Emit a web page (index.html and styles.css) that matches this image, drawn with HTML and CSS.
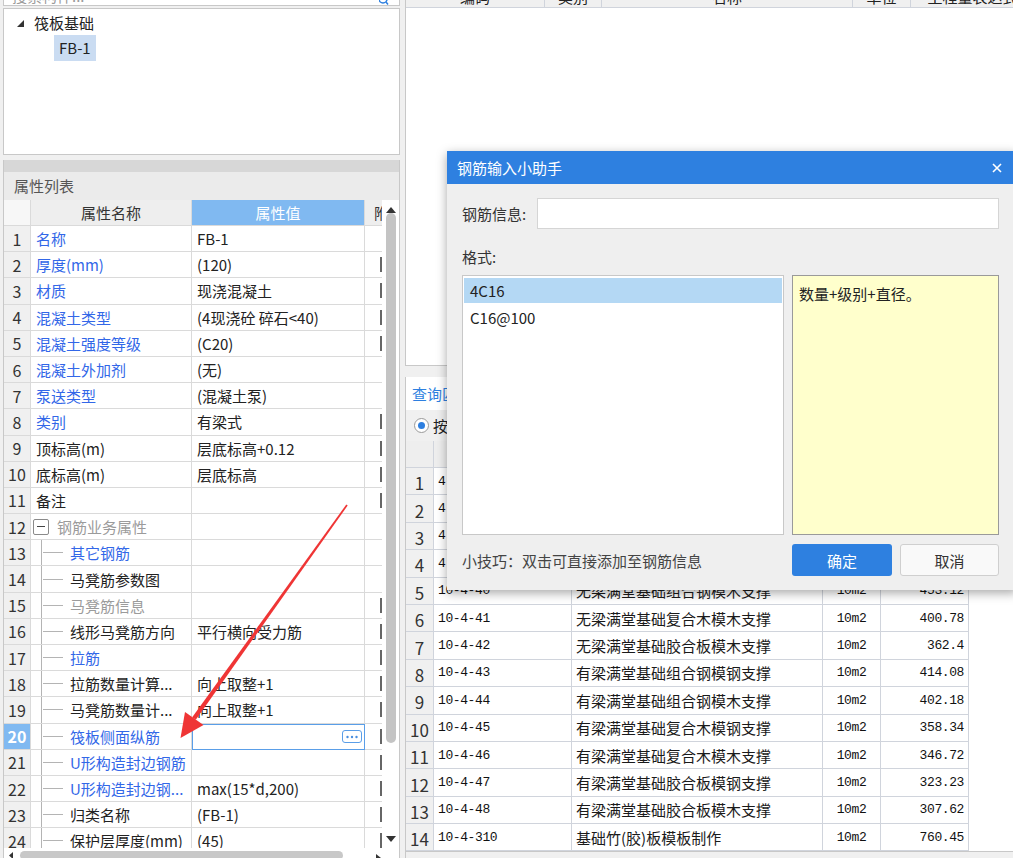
FILE: index.html
```html
<!DOCTYPE html>
<html lang="zh-CN">
<head>
<meta charset="utf-8">
<title>钢筋输入小助手</title>
<link rel="stylesheet" href="styles.css">
</head>
<body>
<div class="app">
  <aside class="left">
    <div class="search">
      <span class="search-text">搜索构件...</span>
      <svg class="search-icon" width="10" height="6" viewBox="0 0 10 6"><circle cx="4" cy="-1" r="4" fill="none" stroke="#2e80e0" stroke-width="1.5"/><line x1="7" y1="2" x2="9" y2="4.5" stroke="#2e80e0" stroke-width="1.5"/></svg>
    </div>
    <div class="tree">
      <div class="tree-row root">
        <svg class="caret" width="7" height="7" viewBox="0 0 7 7"><polygon points="7,0 7,7 0,7" fill="#333"/></svg>
        <span>筏板基础</span>
      </div>
      <div class="tree-row child"><span class="tree-sel">FB-1</span></div>
    </div>
    <section class="prop-panel">
      <div class="strip"></div>
      <div class="prop-title">属性列表</div>
      <div class="grid-wrap">
        <div class="grid">
          <div class="h hrn"></div><div class="h">属性名称</div><div class="h hv">属性值</div><div class="h hx">附加</div>

          <div class="rn">1</div><div class="nm blue">名称</div><div class="val">FB-1</div><div class="ex"></div>
          <div class="rn">2</div><div class="nm blue">厚度(mm)</div><div class="val">(120)</div><div class="ex"><i></i></div>
          <div class="rn">3</div><div class="nm blue">材质</div><div class="val">现浇混凝土</div><div class="ex"><i></i></div>
          <div class="rn">4</div><div class="nm blue">混凝土类型</div><div class="val">(4现浇砼 碎石&lt;40)</div><div class="ex"><i></i></div>
          <div class="rn">5</div><div class="nm blue">混凝土强度等级</div><div class="val">(C20)</div><div class="ex"><i></i></div>
          <div class="rn">6</div><div class="nm blue">混凝土外加剂</div><div class="val">(无)</div><div class="ex"></div>
          <div class="rn">7</div><div class="nm blue">泵送类型</div><div class="val">(混凝土泵)</div><div class="ex"></div>
          <div class="rn">8</div><div class="nm blue">类别</div><div class="val">有梁式</div><div class="ex"><i></i></div>
          <div class="rn">9</div><div class="nm">顶标高(m)</div><div class="val">层底标高+0.12</div><div class="ex"><i></i></div>
          <div class="rn">10</div><div class="nm">底标高(m)</div><div class="val">层底标高</div><div class="ex"><i></i></div>
          <div class="rn">11</div><div class="nm">备注</div><div class="val"></div><div class="ex"><i></i></div>
          <div class="rn">12</div><div class="nm grp"><span class="box"><b></b></span><span class="gray">钢筋业务属性</span></div><div class="val"></div><div class="ex"></div>
          <div class="rn">13</div><div class="nm c"><span class="br"></span><span class="t blue">其它钢筋</span></div><div class="val"></div><div class="ex"></div>
          <div class="rn">14</div><div class="nm c"><span class="br"></span><span class="t">马凳筋参数图</span></div><div class="val"></div><div class="ex"></div>
          <div class="rn">15</div><div class="nm c"><span class="br"></span><span class="t gray">马凳筋信息</span></div><div class="val"></div><div class="ex"><i></i></div>
          <div class="rn">16</div><div class="nm c"><span class="br"></span><span class="t">线形马凳筋方向</span></div><div class="val">平行横向受力筋</div><div class="ex"><i></i></div>
          <div class="rn">17</div><div class="nm c"><span class="br"></span><span class="t blue">拉筋</span></div><div class="val"></div><div class="ex"><i></i></div>
          <div class="rn">18</div><div class="nm c"><span class="br"></span><span class="t">拉筋数量计算...</span></div><div class="val">向上取整+1</div><div class="ex"><i></i></div>
          <div class="rn">19</div><div class="nm c"><span class="br"></span><span class="t">马凳筋数量计...</span></div><div class="val">向上取整+1</div><div class="ex"><i></i></div>
          <div class="rn sel">20</div><div class="nm c"><span class="br"></span><span class="t blue">筏板侧面纵筋</span></div><div class="val edit"><span class="more"><svg width="14" height="4" viewBox="0 0 14 4"><circle cx="2.5" cy="2" r="1.2" fill="#4a8fe0"/><circle cx="7" cy="2" r="1.2" fill="#4a8fe0"/><circle cx="11.5" cy="2" r="1.2" fill="#4a8fe0"/></svg></span></div><div class="ex"><i></i></div>
          <div class="rn">21</div><div class="nm c"><span class="br"></span><span class="t blue">U形构造封边钢筋</span></div><div class="val"></div><div class="ex"><i></i></div>
          <div class="rn">22</div><div class="nm c"><span class="br"></span><span class="t blue">U形构造封边钢...</span></div><div class="val">max(15*d,200)</div><div class="ex"><i></i></div>
          <div class="rn">23</div><div class="nm c"><span class="br"></span><span class="t">归类名称</span></div><div class="val">(FB-1)</div><div class="ex"><i></i></div>
          <div class="rn">24</div><div class="nm c"><span class="br"></span><span class="t">保护层厚度(mm)</span></div><div class="val">(45)</div><div class="ex"><i></i></div>
        </div>
        <div class="vscroll">
          <div class="vs-up"><svg width="10" height="6" viewBox="0 0 10 6"><polygon points="5,0 10,6 0,6" fill="#333"/></svg></div>
          <div class="vs-thumb"></div>
          <div class="vs-fill"></div>
          <div class="vs-down"><svg width="10" height="6" viewBox="0 0 10 6"><polygon points="0,0 10,0 5,6" fill="#333"/></svg></div>
        </div>
      </div>
      <div class="hscroll">
        <svg class="hs-left" width="4" height="7" viewBox="0 0 4 7"><polygon points="4,0 4,7 0,3.5" fill="#333"/></svg>
        <div class="hs-thumb"></div>
        <svg class="hs-right" width="5" height="8" viewBox="0 0 5 8"><polygon points="0,0 5,4 0,8" fill="#333"/></svg>
      </div>
    </section>
  </aside>

  <div class="splitter"></div>

  <main class="right">
    <div class="top-table">
      <div class="tt-head">
        <span><b>编码</b></span><span><b>类别</b></span><span><b>名称</b></span><span><b>单位</b></span><span><b>工程量表达式</b></span><span></span>
      </div>
    </div>
    <div class="bottom">
      <div class="tabs"><span class="tab">查询匹配定额</span></div>
      <div class="radio-row"><span class="radio"><span class="dot"></span></span><span>按构件类型过滤</span></div>
      <div class="btable-wrap">
        <div class="btable">
          <div class="bh"></div><div class="bh">编码</div><div class="bh">名称</div><div class="bh">单位</div><div class="bh">单价</div>

          <div class="brn">1</div><div class="code">4-1-21</div><div class="nmc">满堂基础</div><div class="unit">10m3</div><div class="num">3012.50</div>
          <div class="brn">2</div><div class="code">4-2-21</div><div class="nmc">满堂基础</div><div class="unit">10m3</div><div class="num">3210.40</div>
          <div class="brn">3</div><div class="code">4-4-22</div><div class="nmc">满堂基础</div><div class="unit">10m3</div><div class="num">3301.18</div>
          <div class="brn">4</div><div class="code">4-4-23</div><div class="nmc">满堂基础</div><div class="unit">10m3</div><div class="num">3356.02</div>
          <div class="brn">5</div><div class="code">10-4-40</div><div class="nmc">无梁满堂基础组合钢模木支撑</div><div class="unit">10m2</div><div class="num">453.12</div>
          <div class="brn">6</div><div class="code">10-4-41</div><div class="nmc">无梁满堂基础复合木模木支撑</div><div class="unit">10m2</div><div class="num">400.78</div>
          <div class="brn">7</div><div class="code">10-4-42</div><div class="nmc">无梁满堂基础胶合板模木支撑</div><div class="unit">10m2</div><div class="num">362.4</div>
          <div class="brn">8</div><div class="code">10-4-43</div><div class="nmc">有梁满堂基础组合钢模钢支撑</div><div class="unit">10m2</div><div class="num">414.08</div>
          <div class="brn">9</div><div class="code">10-4-44</div><div class="nmc">有梁满堂基础组合钢模木支撑</div><div class="unit">10m2</div><div class="num">402.18</div>
          <div class="brn">10</div><div class="code">10-4-45</div><div class="nmc">有梁满堂基础复合木模钢支撑</div><div class="unit">10m2</div><div class="num">358.34</div>
          <div class="brn">11</div><div class="code">10-4-46</div><div class="nmc">有梁满堂基础复合木模木支撑</div><div class="unit">10m2</div><div class="num">346.72</div>
          <div class="brn">12</div><div class="code">10-4-47</div><div class="nmc">有梁满堂基础胶合板模钢支撑</div><div class="unit">10m2</div><div class="num">323.23</div>
          <div class="brn">13</div><div class="code">10-4-48</div><div class="nmc">有梁满堂基础胶合板模木支撑</div><div class="unit">10m2</div><div class="num">307.62</div>
          <div class="brn">14</div><div class="code">10-4-310</div><div class="nmc">基础竹(胶)板模板制作</div><div class="unit">10m2</div><div class="num">760.45</div>
        </div>
      </div>
    </div>
  </main>
</div>

<div class="dialog">
  <div class="dlg-title">
    <span>钢筋输入小助手</span>
    <svg width="10" height="10" viewBox="0 0 10 10"><path d="M1 1 L9 9 M9 1 L1 9" stroke="#fff" stroke-width="1.6"/></svg>
  </div>
  <div class="dlg-body">
    <div class="info-row">
      <span class="lbl">钢筋信息:</span>
      <div class="input"></div>
    </div>
    <div class="fmt-lbl">格式:</div>
    <div class="lists">
      <div class="list">
        <div class="item on">4C16</div>
        <div class="item">C16@100</div>
      </div>
      <div class="hint">数量+级别+直径。</div>
    </div>
    <div class="foot">
      <span class="tip">小技巧：双击可直接添加至钢筋信息</span>
      <span class="btn ok">确定</span>
      <span class="btn cancel">取消</span>
    </div>
  </div>
</div>

<svg class="annot" width="1013" height="858" viewBox="0 0 1013 858">
  <polygon points="347.7,505.5 346.3,504.5 192.2,717.2 195.8,719.8" fill="#ef3535"/>
  <polygon points="180.5,738 185,712 203.5,725" fill="#ef3535"/>
</svg>
</body>
</html>
```

FILE: styles.css
```css
* { box-sizing: border-box; }
html, body { margin: 0; padding: 0; }
body {
  width: 1013px;
  height: 858px;
  overflow: hidden;
  position: relative;
  background: #f0f0f0;
  font-family: "Noto Sans CJK SC", "Noto Sans", sans-serif;
  font-size: 15px;
  color: #222;
}
.app { display: flex; height: 858px; }

/* ---------- left ---------- */
.left { width: 400px; flex: none; display: flex; flex-direction: column; }
.search {
  height: 6px;
  margin-left: 3px;
  background: #fff;
  border: 1px solid #c8c8c8;
  border-top: none;
  display: flex;
  align-items: flex-end;
  justify-content: space-between;
  overflow: hidden;
  padding: 0 10px 0 8px;
  flex: none;
}
.search-text { height: 18px; line-height: 18px; flex: none; color: #9a9a9a; }
.search-icon { flex: none; align-self: flex-start; }

.tree {
  margin: 2px 0 0 3px;
  height: 147px;
  flex: none;
  background: #fff;
  border: 1px solid #c8c8c8;
}
.tree-row { height: 26px; display: flex; align-items: center; }
.tree-row.root { padding-left: 13px; }
.caret { margin-right: 10px; margin-top: 3px; }
.tree-row.child { padding-left: 50px; }
.tree-sel { height: 26px; line-height: 26px; padding: 0 5px; background: #cadcf2; }

.prop-panel {
  margin: 5px 0 0 3px;
  flex: 1;
  min-height: 0;
  border-left: 1px solid #c8c8c8;
  border-right: 1px solid #c8c8c8;
  display: flex;
  flex-direction: column;
  overflow: hidden;
}
.strip { height: 12px; flex: none; background: #d7d7d7; }
.prop-title { height: 28px; flex: none; line-height: 28px; padding-left: 10px; background: #ebebeb; color: #555; }
.grid-wrap { display: flex; height: 648px; flex: none; background: #fff; }
.grid {
  width: 378px;
  flex: none;
  display: grid;
  grid-template-columns: 27px 161px 173px 17px;
  grid-template-rows: 26px;
  grid-auto-rows: 26.2px;
  align-content: start;
  overflow: hidden;
}
.grid > div {
  border-right: 1px solid #dadada;
  border-bottom: 1px solid #dadada;
  display: flex;
  align-items: center;
  white-space: nowrap;
  overflow: hidden;
}
.grid > .h { background: #eeeeee; justify-content: center; color: #333; }
.grid > .hrn { background: #f7f7f7; }
.grid > .hv { background: #80b9f1; color: #fff; }
.grid > .hx { justify-content: flex-start; padding-left: 9px; border-right: none; }
.grid > .rn { background: #f0f0f0; justify-content: center; font-size: 16px; color: #333; }
.grid > .rn.sel { background: #80b9f1; color: #fff; font-weight: bold; }
.grid > .nm { padding-left: 5px; }
.grid > .val { padding-left: 5px; }
.grid > .ex { justify-content: flex-end; border-right: none; }
.ex i { display: block; width: 2px; height: 15px; background: #666; }
.blue { color: #3267e8; }
.gray { color: #9b9b9b; }
.grid > .grp { padding-left: 2px; }
.box {
  width: 16px; height: 16px;
  border: 1px solid #8a8a8a;
  border-radius: 2px;
  background: #fff;
  display: flex;
  align-items: center;
  justify-content: center;
  margin-right: 8px;
  flex: none;
}
.box b { width: 8px; height: 1px; background: #444; }
.grid > .nm.c { padding-left: 0; align-items: stretch; }
.br {
  margin-left: 10px;
  width: 22px;
  flex: none;
  border-left: 1px solid #b4b4b4;
  display: flex;
  align-items: center;
}
.br::after { content: ""; width: 20px; height: 1px; margin-left: 1px; background: #b4b4b4; }
.t { align-self: center; margin-left: 7px; }
.grid > .val.edit { border: 1px solid #5a9ee8; justify-content: flex-end; padding-right: 2px; }
.more {
  width: 20px; height: 13px;
  border: 1px solid #5a9ee8;
  border-radius: 3px;
  display: flex;
  align-items: center;
  justify-content: center;
  background: #fff;
}

.vscroll { width: 17px; flex: none; display: flex; flex-direction: column; background: #fff; }
.vs-up { height: 13px; display: flex; align-items: flex-end; justify-content: center; padding-left: 1px; }
.vs-thumb { height: 530px; margin: 0 3px 0 4px; border-radius: 5px; background: #c4c4c4; }
.vs-fill { flex: 1; }
.vs-down { height: 12px; display: flex; align-items: flex-start; justify-content: center; padding-left: 1px; }

.hscroll { height: 10px; flex: none; display: flex; align-items: flex-start; padding-top: 3px; background: #fff; }
.hs-left { margin: 1px 0 0 5px; flex: none; }
.hs-thumb { width: 323px; height: 9px; margin-left: 7px; border-radius: 5px; background: #c8c8c8; flex: none; }
.hs-right { margin: 3px 0 0 33px; flex: none; }

.splitter { width: 5px; flex: none; }

/* ---------- right ---------- */
.right { flex: 1; min-width: 0; display: flex; flex-direction: column; }
.top-table {
  height: 366px;
  flex: none;
  background: #fff;
  border-left: 1px solid #c8c8c8;
  border-bottom: 1px solid #c8c8c8;
}
.tt-head {
  height: 8px;
  display: grid;
  grid-template-columns: 139px 57px 251px 58px 124px 1fr;
  background: #f0f0f0;
  border-bottom: 1px solid #d0d4dc;
  overflow: hidden;
}
.tt-head span {
  display: flex;
  align-items: flex-end;
  justify-content: center;
  border-right: 1px solid #d0d4dc;
  overflow: hidden;
  white-space: nowrap;
}
.tt-head b { font-weight: normal; line-height: 20px; height: 20px; flex: none; }

.bottom {
  margin-top: 11px;
  flex: 1;
  display: flex;
  flex-direction: column;
  border-left: 1px solid #c8c8c8;
}
.tabs { height: 33px; flex: none; display: flex; }
.tab { background: #fff; line-height: 33px; padding: 0 6px; color: #2d7fe0; }
.radio-row { height: 31px; flex: none; display: flex; align-items: center; padding-left: 8px; gap: 4px; }
.radio {
  width: 15px; height: 15px;
  border-radius: 50%;
  border: 1px solid #9a9a9a;
  background: #fff;
  display: flex;
  align-items: center;
  justify-content: center;
}
.dot { width: 7px; height: 7px; border-radius: 50%; background: #2d7fe0; }
.btable-wrap { height: 411px; flex: none; background: #fff; border-bottom: 1px solid #c8c8c8; }
.btable {
  display: grid;
  grid-template-columns: 28px 138px 251px 58px 88px;
  grid-template-rows: 27px;
  grid-auto-rows: 27.4px;
  align-content: start;
  width: 563px;
}
.btable > div {
  border-right: 1px solid #d0d4dc;
  border-bottom: 1px solid #d0d4dc;
  display: flex;
  align-items: center;
  white-space: nowrap;
  overflow: hidden;
}
.btable > .bh { background: #eeeeee; justify-content: center; }
.btable > .brn { background: #f0f0f0; justify-content: center; font-size: 17px; padding-top: 3px; color: #333; }
.btable > .code,
.btable > .unit,
.btable > .num {
  font-family: "Liberation Mono", monospace;
  font-size: 13px;
  letter-spacing: -0.4px;
  color: #111;
}
.btable > .code { padding-left: 4px; }
.btable > .nmc { padding-left: 4px; color: #1a1a1a; }
.btable > .unit { justify-content: center; }
.btable > .num { justify-content: flex-end; padding-right: 4px; }

/* ---------- dialog ---------- */
.dialog {
  position: absolute;
  left: 447px;
  top: 151px;
  width: 570px;
  height: 439px;
  background: #efefef;
  box-shadow: 0 3px 10px rgba(0, 0, 0, 0.35);
  display: flex;
  flex-direction: column;
}
.dlg-title {
  height: 33px;
  flex: none;
  background: #2e80e0;
  color: #fff;
  display: flex;
  align-items: center;
  justify-content: space-between;
  padding: 0 15px 0 10px;
}
.dlg-body { flex: 1; display: flex; flex-direction: column; padding: 14px 18px 14px 15px; }
.info-row { height: 31px; display: flex; align-items: center; flex: none; }
.lbl { width: 75px; flex: none; color: #333; }
.input { flex: 1; height: 31px; background: #fff; border: 1px solid #d5d5d5; }
.fmt-lbl { margin-top: 18px; height: 20px; line-height: 20px; color: #333; flex: none; }
.lists { margin-top: 8px; height: 260px; display: flex; gap: 8px; flex: none; }
.list { width: 322px; flex: none; background: #fff; border: 1px solid #c8c8c8; padding: 2px 1px; display: flex; flex-direction: column; gap: 2px; }
.item { height: 25px; line-height: 25px; padding-left: 6px; color: #222; }
.item.on { background: #b4d8f4; }
.hint { flex: 1; background: #ffffcc; border: 1px solid #9a9a9a; padding: 6px 6px; line-height: 24px; color: #222; }
.foot { margin-top: 9px; height: 32px; display: flex; align-items: center; flex: none; }
.tip { flex: 1; color: #444; }
.btn { height: 32px; display: flex; align-items: center; justify-content: center; border-radius: 3px; }
.ok { width: 100px; background: #2e80e0; color: #fff; margin-right: 8px; }
.cancel { width: 99px; background: #f9f9f9; border: 1px solid #cfcfcf; color: #333; }

.annot { position: absolute; left: 0; top: 0; pointer-events: none; }
```
